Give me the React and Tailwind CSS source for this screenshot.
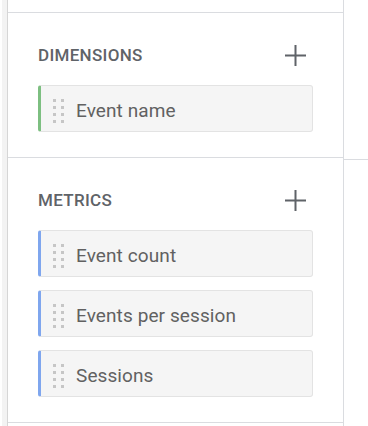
import React from "react";

const dimensions = [{ name: "Event name" }];
const metrics = [
  { name: "Event count" },
  { name: "Events per session" },
  { name: "Sessions" },
];

const PlusIcon = () => (
  <svg width="21" height="21" viewBox="0 0 21 21" className="text-[#5f6368]">
    <path d="M10.5 0v21M0 10.5h21" stroke="currentColor" strokeWidth="2" fill="none" />
  </svg>
);

const DragHandle = () => (
  <div className="grid grid-cols-2 gap-x-[5px] gap-y-[4px]">
    {Array.from({ length: 8 }).map((_, i) => (
      <span key={i} className="block w-[3px] h-[3px] bg-[#c6c6c6]" />
    ))}
  </div>
);

const Chip = ({ name, accent }) => (
  <div
    className={`flex items-center h-[47px] rounded-[3px] border border-[#e3e3e3] border-l-[3px] bg-[#f5f5f5] ${accent}`}
  >
    <div className="ml-[12px] mt-[4px]">
      <DragHandle />
    </div>
    <span className="ml-[12px] mt-[5px] text-[19px] text-[#616161] tracking-[0.1px]">{name}</span>
  </div>
);

const Section = ({ title, items, accent }) => (
  <section className="px-[30px] pt-[30px] pb-[25px] border-b border-[#dadce0]">
    <div className="flex items-center justify-between h-6">
      <h2 className="mt-[2px] text-[17px] font-medium tracking-[0.3px] text-[#5f6368]">{title}</h2>
      <button className="w-9 h-9 flex items-center justify-center">
        <PlusIcon />
      </button>
    </div>
    <div className="mt-[18px] flex flex-col gap-[13px]">
      {items.map((item) => (
        <Chip key={item.name} name={item.name} accent={accent} />
      ))}
    </div>
  </section>
);

export default function App() {
  return (
    <div
      className="flex w-[368px] h-[426px] bg-white overflow-hidden"
      style={{ fontFamily: "Roboto, 'Liberation Sans', sans-serif" }}
    >
      <div className="w-[8px] h-full flex">
        <div className="w-[2px] bg-white" />
        <div className="flex-1 bg-[#f3f3f3] border-r border-[#d6d6d6]" />
      </div>
      <div className="w-[336px] h-full border-r border-[#dadce0] flex flex-col">
        <div className="h-[13px] border-b border-[#dadce0]" />
        <Section title="DIMENSIONS" items={dimensions} accent="border-l-[#7dbf81]" />
        <Section title="METRICS" items={metrics} accent="border-l-[#7fa6ee]" />
      </div>
      <div className="flex-1">
        <div className="h-[160px] border-b border-[#dadce0]" />
      </div>
    </div>
  );
}
